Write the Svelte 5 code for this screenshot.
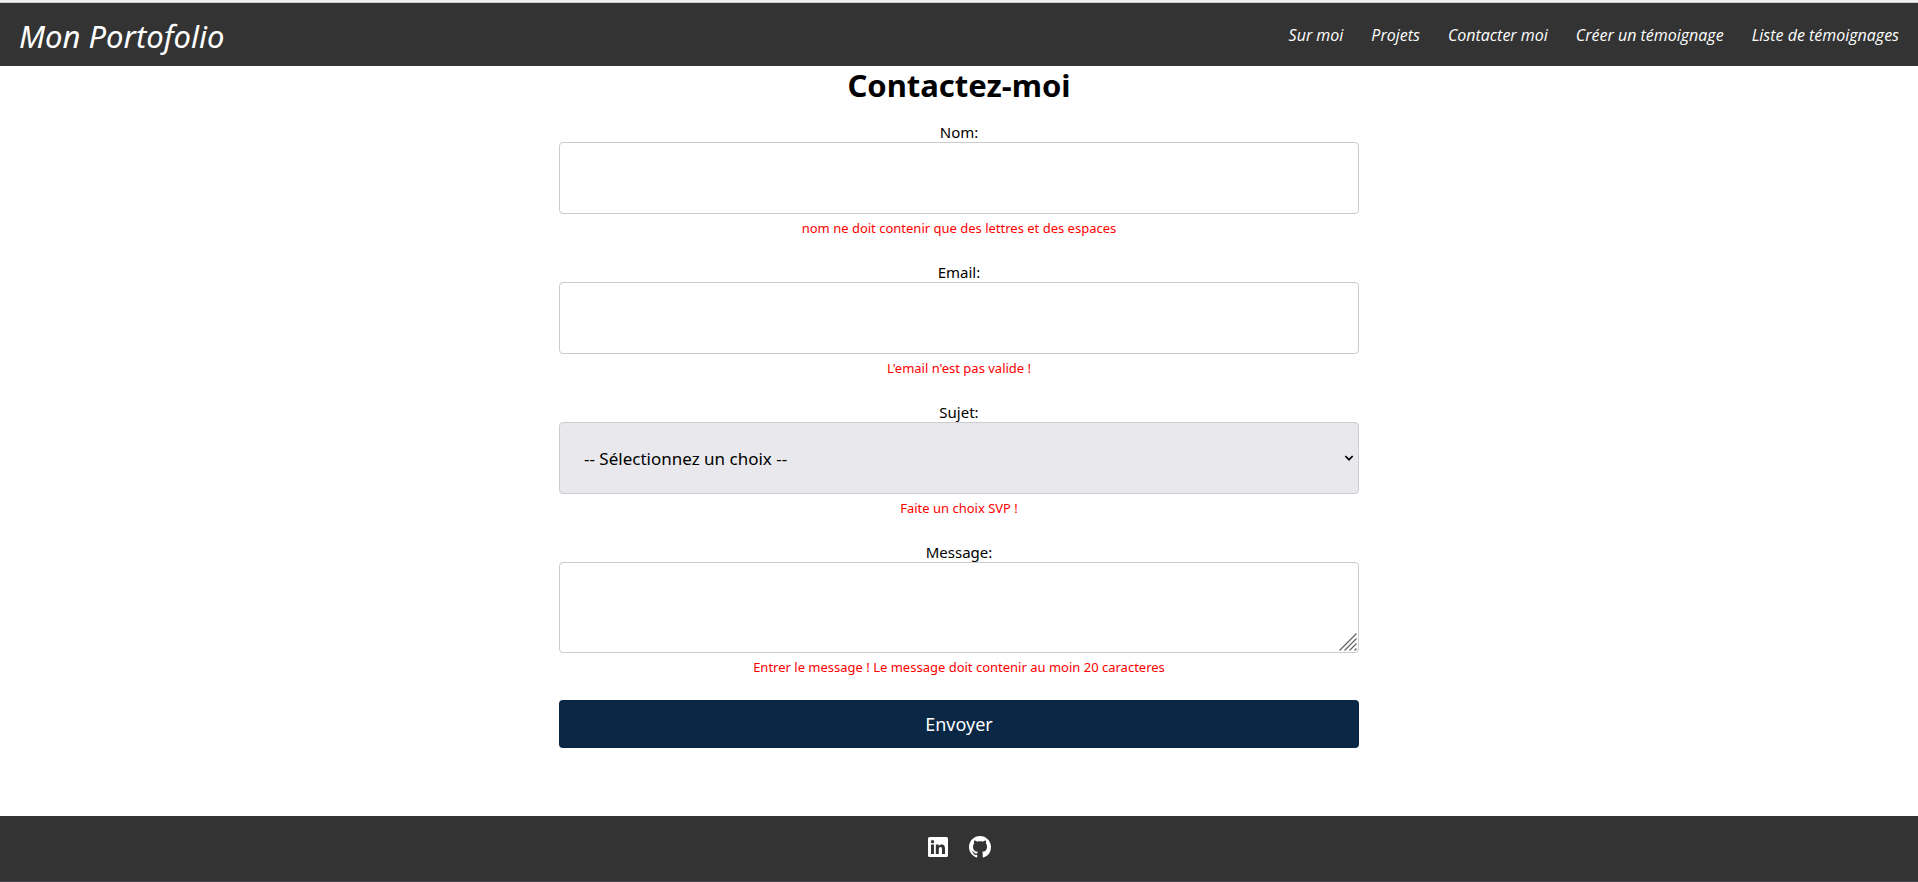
<script>
  const links = ['Sur moi', 'Projets', 'Contacter moi', 'Créer un témoignage', 'Liste de témoignages'];
  let nom = $state('');
  let email = $state('');
  let sujet = $state('');
  let message = $state('');
</script>

<div class="page">
  <header>
    <a class="brand" href="#accueil">Mon Portofolio</a>
    <nav>
      {#each links as link}
        <a href="#{link}">{link}</a>
      {/each}
    </nav>
  </header>

  <main>
    <h1>Contactez-moi</h1>
    <form novalidate onsubmit={(e) => e.preventDefault()}>
      <div class="field">
        <label for="nom">Nom:</label>
        <input id="nom" type="text" bind:value={nom} />
        <p class="error">nom ne doit contenir que des lettres et des espaces</p>
      </div>
      <div class="field">
        <label for="email">Email:</label>
        <input id="email" type="email" bind:value={email} />
        <p class="error">L'email n'est pas valide !</p>
      </div>
      <div class="field">
        <label for="sujet">Sujet:</label>
        <div class="choice">
          <select id="sujet" bind:value={sujet}>
            <option value="">-- Sélectionnez un choix --</option>
          </select>
          <svg class="chevron" width="10" height="6" viewBox="0 0 10 6" aria-hidden="true">
            <path d="M1.3 1 5 4.7 8.7 1" fill="none" stroke="#000" stroke-width="1.7" />
          </svg>
        </div>
        <p class="error">Faite un choix SVP !</p>
      </div>
      <div class="field">
        <label for="message">Message:</label>
        <div class="choice">
          <textarea id="message" bind:value={message}></textarea>
          <svg class="grip" width="18" height="18" viewBox="0 0 18 18" aria-hidden="true">
            <path d="M.5 17.5 17.5.5M5.5 17.5l12-12M10.5 17.5l7-7M15.5 17.5l2-2" stroke="#666" stroke-width="1.3" />
          </svg>
        </div>
        <p class="error">Entrer le message ! Le message doit contenir au moin 20 caracteres</p>
      </div>
      <button type="submit">Envoyer</button>
    </form>
  </main>

  <footer>
    <a href="#linkedin" aria-label="LinkedIn">
      <svg width="20" height="20" viewBox="0 0 20 20" fill="#fff">
        <path fill-rule="evenodd" d="M1.500 0h17A1.500 1.500 0 0 1 20 1.500v17a1.500 1.500 0 0 1-1.500 1.500h-17A1.500 1.500 0 0 1 0 18.500v-17A1.500 1.500 0 0 1 1.500 0zM3 7.600v9.400h3V7.600zM4.500 2.900a1.730 1.730 0 1 0 0 3.460 1.730 1.730 0 0 0 0-3.460zM7.800 7.600V17h3v-4.700c0-1.200.3-2.400 1.700-2.400 1.500 0 1.500 1.400 1.500 2.500V17h3v-5.200c0-2.500-.5-4.400-3.500-4.400-1.400 0-2.400.8-2.800 1.500V7.600z" />
      </svg>
    </a>
    <a href="#github" aria-label="GitHub">
      <svg width="22" height="22" viewBox="0 0 16 16" fill="#fff">
        <path d="M8 0C3.580 0 0 3.580 0 8c0 3.540 2.290 6.530 5.470 7.590.4.070.55-.17.55-.38 0-.19-.01-.82-.01-1.490-2.010.37-2.530-.49-2.690-.94-.09-.23-.48-.94-.82-1.130-.28-.15-.68-.52-.01-.53.63-.01 1.080.58 1.230.82.72 1.210 1.870.87 2.330.66.070-.52.28-.87.51-1.070-1.780-.2-3.640-.89-3.640-3.950 0-.87.31-1.590.82-2.150-.08-.2-.36-1.020.08-2.120 0 0 .67-.21 2.200.82.64-.18 1.320-.27 2-.27s1.360.09 2 .27c1.530-1.040 2.200-.82 2.200-.82.44 1.100.16 1.920.08 2.120.51.56.82 1.270.82 2.150 0 3.070-1.870 3.750-3.650 3.950.29.25.54.73.54 1.480 0 1.070-.01 1.930-.01 2.200 0 .21.15.46.55.38A8.010 8.010 0 0 0 16 8c0-4.420-3.580-8-8-8z" />
      </svg>
    </a>
  </footer>
</div>

<style>
  :global(body) {
    background: #fff;
  }

  .page {
    display: flex;
    flex-direction: column;
    min-height: 100vh;
    box-sizing: border-box;
    border-top: 2px solid #f0f0f4;
    border-bottom: 1px solid #4a4a4c;
    font-family: 'Segoe UI', 'Noto Sans', sans-serif;
    font-size: 15px;
    color: #000;
  }

  header {
    display: flex;
    align-items: center;
    justify-content: space-between;
    box-sizing: border-box;
    height: 64px;
    padding: 0 19px;
    border-top: 1px solid #ccc;
    background: #333;
    font-style: italic;
  }

  header a {
    color: #fff;
    text-decoration: none;
  }

  .brand {
    padding-top: 2px;
    font-size: 31px;
  }

  nav {
    display: flex;
    gap: 28px;
    font-family: 'Segoe UI', 'Open Sans', sans-serif;
    font-size: 16px;
  }

  main {
    flex: 1;
    width: 800px;
    max-width: 100%;
    margin: 0 auto;
    text-align: center;
  }

  h1 {
    margin: 0 0 17px;
    font-size: 31px;
    line-height: 38px;
  }

  .field {
    display: flex;
    flex-direction: column;
    margin-bottom: 24px;
  }

  label {
    padding-top: 2px;
    line-height: 19px;
  }

  input,
  select,
  textarea {
    display: block;
    box-sizing: border-box;
    width: 100%;
    height: 72px;
    padding: 0 24px;
    border: 1px solid #ccc;
    border-radius: 4px;
    background: #fff;
    color: #000;
    font: 17px 'Segoe UI', 'Noto Sans', sans-serif;
  }

  select {
    appearance: none;
    background: #e9e9ed;
  }

  textarea {
    height: 91px;
    padding: 24px;
    resize: none;
  }

  .choice {
    position: relative;
  }

  .chevron,
  .grip {
    position: absolute;
    pointer-events: none;
  }

  .chevron {
    top: 33px;
    right: 5px;
  }

  .grip {
    right: 2px;
    bottom: 2px;
  }

  .error {
    margin: 5px 0 0;
    color: #f00;
    font-size: 13px;
    line-height: 18px;
  }

  button {
    display: block;
    width: 100%;
    height: 48px;
    border: 0;
    border-radius: 4px;
    background: #0a2845;
    color: #fff;
    font: 18px 'Segoe UI', 'Noto Sans', sans-serif;
  }

  footer {
    display: flex;
    align-items: center;
    justify-content: center;
    gap: 21px;
    box-sizing: border-box;
    height: 65px;
    padding-bottom: 4px;
    background: #333;
  }

  footer a {
    display: flex;
  }
</style>
